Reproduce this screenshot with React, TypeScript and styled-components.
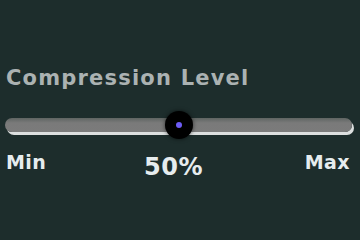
import React from 'react';
import styled, { createGlobalStyle } from 'styled-components';

const GlobalStyle = createGlobalStyle`
  html, body {
    margin: 0;
    padding: 0;
    background: #1d2d2c;
  }
`;

const Panel = styled.div`
  width: 360px;
  height: 240px;
  box-sizing: border-box;
  padding: 64px 8px 0 5px;
  font-family: 'DejaVu Sans', 'Noto Sans', sans-serif;
  display: flex;
  flex-direction: column;
`;

const Title = styled.div`
  color: #abb2b2;
  font-size: 21px;
  font-weight: 700;
  line-height: 28px;
  padding-left: 1px;
  letter-spacing: 1.2px;
`;

const SliderArea = styled.div`
  position: relative;
  margin-top: 26px;
  height: 14px;
`;

const Track = styled.div`
  height: 14px;
  border-radius: 7px;
  background: linear-gradient(#5f6462 0%, #7a7a7a 35%, #7b7b7b 100%);
  box-shadow: 2px 3px 0 #dcdfdf;
`;

const Thumb = styled.div`
  position: absolute;
  top: 50%;
  width: 28px;
  height: 28px;
  border-radius: 50%;
  background: #000;
  transform: translate(-50%, -50%);
  box-shadow: 0 0 4px rgba(0, 0, 0, 0.6);
  display: flex;
  align-items: center;
  justify-content: center;
`;

const Dot = styled.div`
  width: 6px;
  height: 6px;
  border-radius: 50%;
  background: #6d5cf5;
`;

const Scale = styled.div`
  display: flex;
  justify-content: space-between;
  align-items: flex-end;
  margin-top: 18px;
  padding: 0 2px 0 1px;
`;

const Edge = styled.span`
  color: #e6ecee;
  font-size: 19px;
  font-weight: 700;
  line-height: 24px;
  letter-spacing: 0.4px;
`;

const Value = styled.span`
  color: #e6ecee;
  font-size: 24px;
  font-weight: 700;
  line-height: 30px;
  margin-bottom: -8px;
  margin-right: 4px;
  letter-spacing: 0.5px;
`;

export default function App() {
  const value = 50;
  return (
    <>
      <GlobalStyle />
      <Panel>
        <Title>Compression Level</Title>
        <SliderArea>
          <Track />
          <Thumb style={{ left: `${value}%` }}>
            <Dot />
          </Thumb>
        </SliderArea>
        <Scale>
          <Edge>Min</Edge>
          <Value>{value}%</Value>
          <Edge>Max</Edge>
        </Scale>
      </Panel>
    </>
  );
}
